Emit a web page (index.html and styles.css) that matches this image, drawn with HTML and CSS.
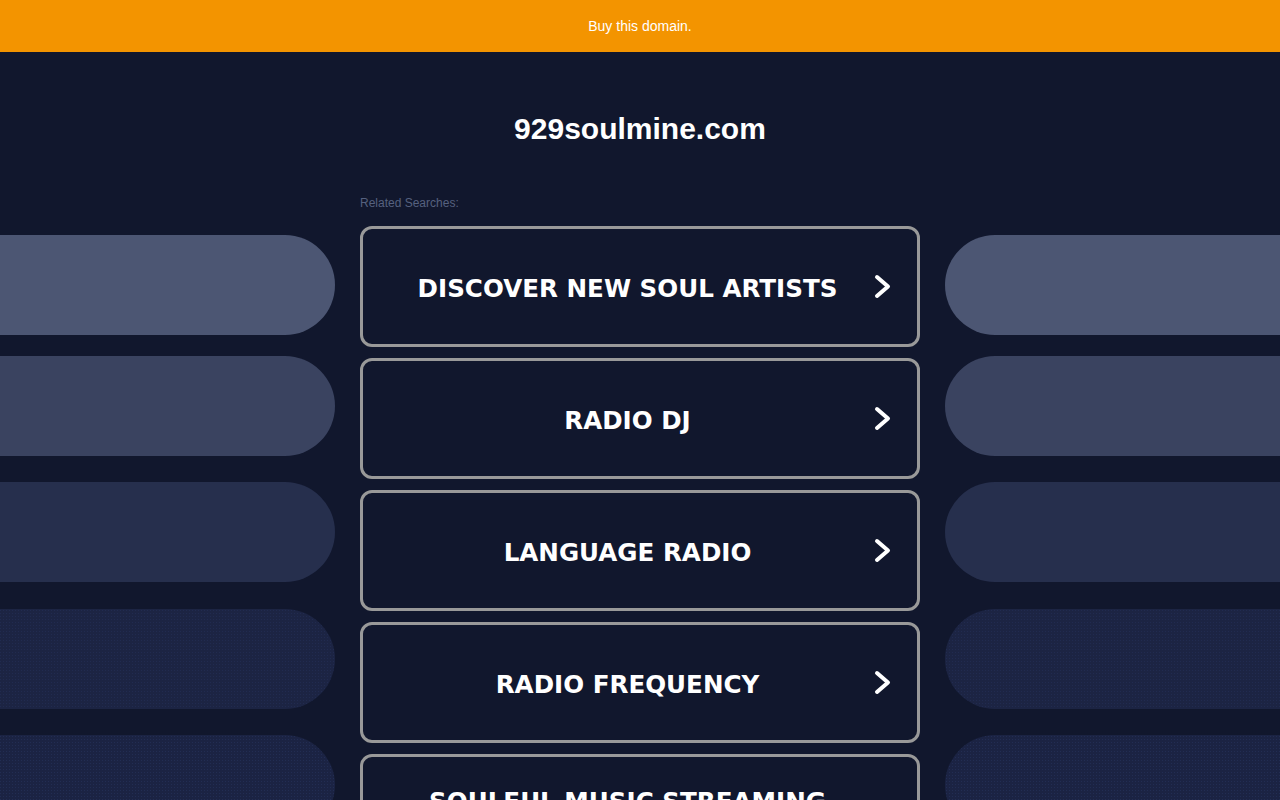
FILE: index.html
```html
<!DOCTYPE html>
<html lang="en">
<head>
  <meta charset="UTF-8">
  <meta name="viewport" content="width=device-width, initial-scale=1.0">
  <title>929soulmine.com</title>
  <link rel="stylesheet" href="styles.css">
</head>
<body>
  <div class="banner">
    <a href="#" class="banner-link">Buy this domain.</a>
  </div>

  <div class="page">
    <h1 class="domain">929soulmine.com</h1>

    <div class="layout">
      <div class="side side-left">
        <div class="pill pill-1"></div>
        <div class="pill pill-2"></div>
        <div class="pill pill-3"></div>
        <div class="pill pill-4"></div>
        <div class="pill pill-5"></div>
      </div>

      <div class="center">
        <p class="related">Related Searches:</p>
        <a href="#" class="search">
          <span class="search-text">DISCOVER NEW SOUL ARTISTS</span>
          <svg class="chevron" width="17" height="25" viewBox="0 0 17 25"><polyline points="3,3 14,12.5 3,22"/></svg>
        </a>
        <a href="#" class="search">
          <span class="search-text">RADIO DJ</span>
          <svg class="chevron" width="17" height="25" viewBox="0 0 17 25"><polyline points="3,3 14,12.5 3,22"/></svg>
        </a>
        <a href="#" class="search">
          <span class="search-text">LANGUAGE RADIO</span>
          <svg class="chevron" width="17" height="25" viewBox="0 0 17 25"><polyline points="3,3 14,12.5 3,22"/></svg>
        </a>
        <a href="#" class="search">
          <span class="search-text">RADIO FREQUENCY</span>
          <svg class="chevron" width="17" height="25" viewBox="0 0 17 25"><polyline points="3,3 14,12.5 3,22"/></svg>
        </a>
        <a href="#" class="search search-last">
          <span class="search-text">SOULFUL MUSIC STREAMING</span>
          <svg class="chevron" width="17" height="25" viewBox="0 0 17 25"><polyline points="3,3 14,12.5 3,22"/></svg>
        </a>
      </div>

      <div class="side side-right">
        <div class="pill pill-1"></div>
        <div class="pill pill-2"></div>
        <div class="pill pill-3"></div>
        <div class="pill pill-4"></div>
        <div class="pill pill-5"></div>
      </div>
    </div>
  </div>
</body>
</html>
```

FILE: styles.css
```css
* {
  margin: 0;
  padding: 0;
  box-sizing: border-box;
}

body {
  font-family: "Liberation Sans", Arial, sans-serif;
  background-color: #11172d;
  color: #fff;
  overflow: hidden;
}

.banner {
  height: 52px;
  background-color: #f39400;
  display: flex;
  justify-content: center;
  align-items: center;
}

.banner-link {
  color: #fff;
  font-size: 14px;
  text-decoration: none;
}

.page {
  padding-top: 59px;
}

.domain {
  font-size: 30px;
  line-height: 36px;
  font-weight: bold;
  text-align: center;
  color: #fff;
}

.layout {
  display: grid;
  grid-template-columns: 1fr 560px 1fr;
  column-gap: 25px;
  margin-top: 48px;
  margin-left: -25px;
  margin-right: -25px;
}

.side {
  padding-top: 40px;
  display: flex;
  flex-direction: column;
}

.pill {
  height: 100px;
  margin-bottom: 26px;
  flex-shrink: 0;
}

.pill-1 {
  margin-bottom: 21px;
  background-color: #4c5673;
}

.pill-2 {
  background-color: #3a4360;
}

.pill-3 {
  margin-bottom: 27px;
  background-color: #262f4d;
}

.pill-4 {
  background-color: #1c2443;
  background-image: radial-gradient(circle, #212b50 0.5px, transparent 0.8px);
  background-size: 3px 3px;
}

.pill-5 {
  background-color: #1b2343;
  background-image: radial-gradient(circle, #222d53 0.6px, transparent 0.9px);
  background-size: 3px 3px;
}

.side-left .pill {
  border-radius: 0 50px 50px 0;
}

.side-right .pill {
  border-radius: 50px 0 0 50px;
}

.related {
  font-size: 12px;
  line-height: 14px;
  color: #56617f;
  margin-top: 1px;
  margin-bottom: 16px;
}

.search {
  position: relative;
  display: flex;
  justify-content: center;
  align-items: center;
  height: 121px;
  margin-bottom: 11px;
  padding: 3px 25px 0 0;
  border: 3px solid #999;
  border-radius: 12px;
  background-color: #11172d;
  text-decoration: none;
}

.search-last {
  padding-bottom: 30px;
}

.search-text {
  font-family: "DejaVu Sans", Verdana, sans-serif;
  font-size: 24.6px;
  font-weight: bold;
  color: #fff;
  text-align: center;
}

.chevron {
  position: absolute;
  right: 26px;
  top: 45px;
  fill: none;
  stroke: #fff;
  stroke-width: 4;
  stroke-linecap: round;
  stroke-linejoin: round;
}
```
